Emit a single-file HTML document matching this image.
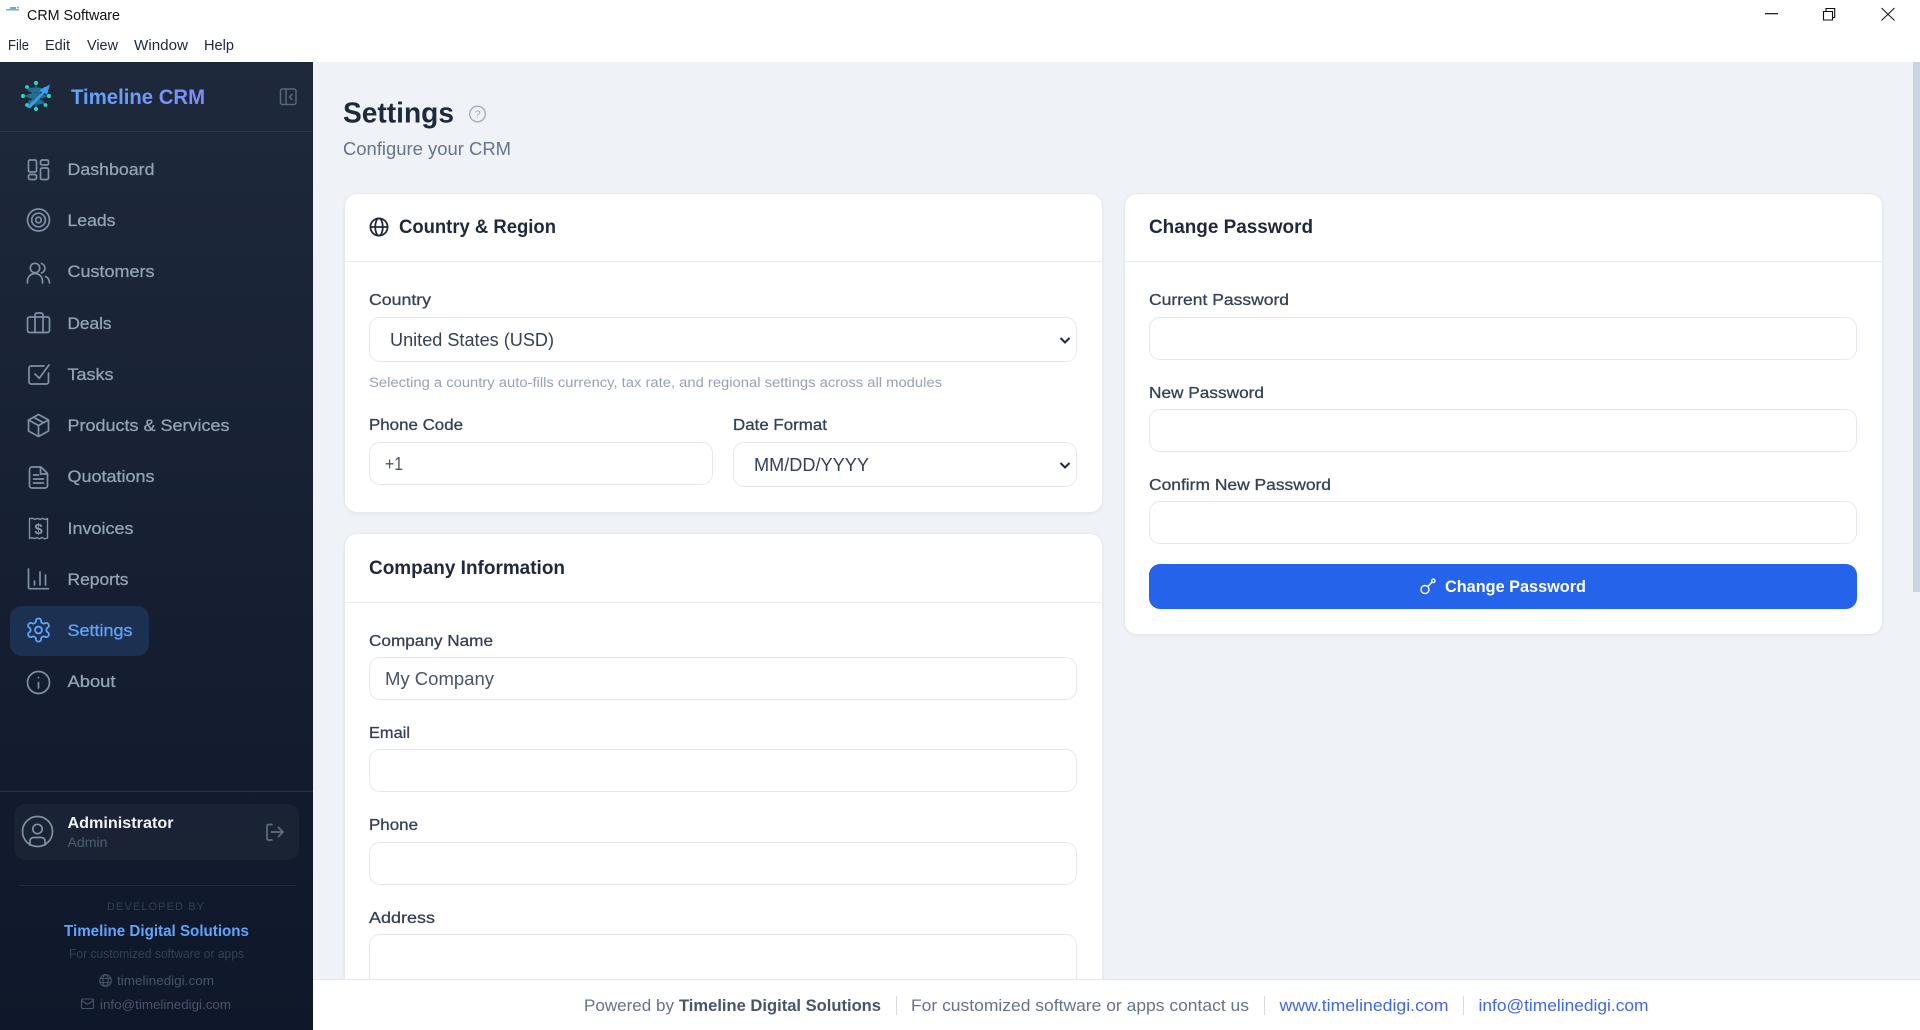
<!DOCTYPE html>
<html lang="en"><head><meta charset="utf-8"><title>CRM Software</title>
<style>
html,body{margin:0;padding:0;width:1920px;height:1030px;overflow:hidden;background:#fff}
.b{position:absolute;box-sizing:border-box}
.card{background:#fff;border:1px solid #e6eaf0;border-radius:13px;box-shadow:0 1px 3px rgba(15,23,42,.05)}
.inp{background:#fff;border:1.3px solid #e5e9ef;border-radius:11px}
svg{position:absolute;left:0;top:0}
text{font-family:"Liberation Sans",sans-serif;white-space:pre}
.m{stroke:currentColor;stroke-width:.28px}
.nav{font-size:17px;fill:#94a3b8;color:#94a3b8}
.lab{font-size:16px;fill:#334155;color:#334155}
.val{font-size:18px;fill:#334155;color:#334155}
.h{font-size:19.5px;font-weight:700;fill:#1e293b}
.ft{font-size:16.5px;fill:#64748b}
.lk{font-size:16.5px;fill:#4169e1}
.i{fill:none;stroke:#8090a6;stroke-width:1.7;stroke-linecap:round;stroke-linejoin:round}
</style></head><body>
<div class="b" style="left:0;top:62px;width:1920px;height:968px;background:#eff3f8"></div>
<div class="b" style="left:1913px;top:62px;width:7px;height:530px;background:#cbd5e1"></div>
<div class="b" style="left:0;top:62px;width:313px;height:968px;background:linear-gradient(180deg,#1e293b 0%,#0f172a 100%)"></div>
<div class="b" style="left:0;top:131px;width:313px;height:1px;background:#2b384c"></div>
<div class="b" style="left:10px;top:606px;width:139px;height:50px;background:#1c3052;border-radius:12px"></div>
<div class="b" style="left:0;top:791px;width:313px;height:1px;background:#253247"></div>
<div class="b" style="left:14px;top:804px;width:285px;height:56px;background:rgba(255,255,255,.035);border-radius:12px"></div>
<div class="b" style="left:19px;top:885px;width:277px;height:1px;background:#1f2b3f"></div>

<div class="b card" style="left:343.5px;top:192.5px;width:759px;height:320.5px"></div>
<div class="b" style="left:344px;top:260.5px;width:758px;height:1.5px;background:#e8ecf1"></div>
<div class="b inp" style="left:369px;top:317px;width:708px;height:45px"></div>
<div class="b inp" style="left:369px;top:442px;width:344px;height:43px"></div>
<div class="b inp" style="left:733px;top:442px;width:344px;height:45px"></div>

<div class="b card" style="left:343.5px;top:533px;width:759px;height:470px"></div>
<div class="b" style="left:344px;top:601.5px;width:758px;height:1.5px;background:#e8ecf1"></div>
<div class="b inp" style="left:369px;top:657px;width:708px;height:43px"></div>
<div class="b inp" style="left:369px;top:749px;width:708px;height:43px"></div>
<div class="b inp" style="left:369px;top:842px;width:708px;height:43px"></div>
<div class="b inp" style="left:369px;top:934px;width:708px;height:60px"></div>

<div class="b card" style="left:1123.5px;top:192.5px;width:759px;height:442px"></div>
<div class="b" style="left:1124px;top:260.5px;width:758px;height:1.5px;background:#e8ecf1"></div>
<div class="b inp" style="left:1149px;top:317px;width:708px;height:43px"></div>
<div class="b inp" style="left:1149px;top:409px;width:708px;height:43px"></div>
<div class="b inp" style="left:1149px;top:501px;width:708px;height:43px"></div>
<div class="b" style="left:1149px;top:564px;width:708px;height:45px;background:#2563eb;border-radius:11px"></div>

<div class="b" style="left:313px;top:979px;width:1607px;height:51px;background:#fff;border-top:1.5px solid #e2e8f0"></div>
<div class="b" style="left:896px;top:996px;width:1px;height:19px;background:#d5dbe3"></div>
<div class="b" style="left:1264px;top:996px;width:1px;height:19px;background:#d5dbe3"></div>
<div class="b" style="left:1463px;top:996px;width:1px;height:19px;background:#d5dbe3"></div>

<svg width="1920" height="1030" viewBox="0 0 1920 1030" xmlns="http://www.w3.org/2000/svg">
<defs>
<linearGradient id="tg" gradientUnits="userSpaceOnUse" x1="71" y1="0" x2="205" y2="0"><stop offset="0" stop-color="#60a5fa"/><stop offset="1" stop-color="#818cf8"/></linearGradient>
</defs>
<!-- title bar -->
<g fill="#6fb3c2"><rect x="6" y="9" width="13" height="1.5"/><rect x="10" y="7" width="6" height="3"/><circle cx="18" cy="7.5" r="1"/></g>
<text x="27" y="20" font-size="15" fill="#111" textLength="93" lengthAdjust="spacingAndGlyphs">CRM Software</text>
<g font-size="14.5" fill="#1f2937">
<text x="8" y="50" textLength="21" lengthAdjust="spacingAndGlyphs">File</text>
<text x="45" y="50" textLength="25" lengthAdjust="spacingAndGlyphs">Edit</text>
<text x="87" y="50" textLength="31" lengthAdjust="spacingAndGlyphs">View</text>
<text x="134" y="50" textLength="54" lengthAdjust="spacingAndGlyphs">Window</text>
<text x="204" y="50" textLength="30" lengthAdjust="spacingAndGlyphs">Help</text>
</g>
<path d="M1765 13.7H1778" stroke="#111" stroke-width="1.2" fill="none"/>
<path d="M1823.5 11.5h9v8.5h-9zM1826 11.5V8.5h8.7v9h-2" stroke="#111" stroke-width="1.1" fill="none"/>
<path d="M1881.5 8L1894.5 20.5M1894.5 8L1881.5 20.5" stroke="#111" stroke-width="1" fill="none"/>

<!-- logo -->
<g fill="none" stroke="#1f8f92" stroke-width="1">
<path d="M36 83V109M23 96H49M27 87L45 105M27 105L45 87"/>
</g>
<g fill="#2dd4bf"><circle cx="36" cy="83" r="2.1"/><circle cx="36" cy="109" r="2.1"/><circle cx="23" cy="96" r="2.1"/><circle cx="49" cy="96" r="2.1"/><circle cx="27" cy="87" r="1.9"/><circle cx="45.5" cy="105" r="1.9"/><circle cx="27" cy="105" r="1.9"/></g>
<g fill="#1f6f8f"><ellipse cx="36" cy="90" rx="8.5" ry="2.6"/><ellipse cx="36" cy="96" rx="9.5" ry="3"/><ellipse cx="36" cy="102" rx="8" ry="2.6"/></g>
<path d="M26.5 107L42 92.5L39.5 90L50 84.5L47 95L44.5 93L30 108.5Z" fill="#3b9cf0"/>
<text x="71" y="104" font-size="21" font-weight="700" fill="url(#tg)" textLength="134" lengthAdjust="spacingAndGlyphs">Timeline CRM</text>
<g fill="none" stroke="#58677d" stroke-width="1.5"><rect x="280.5" y="89" width="15.5" height="15.5" rx="2"/><path d="M286 89V104.5M292.5 94L289.5 97L292.5 100"/></g>

<!-- nav icons -->
<g class="i">
<rect x="28.5" y="160" width="8" height="12" rx="1.6"/><rect x="28.5" y="174.5" width="8" height="5" rx="1.6"/><rect x="40.5" y="160" width="8" height="5" rx="1.6"/><rect x="40.5" y="168" width="8" height="11.5" rx="1.6"/>
<circle cx="38.5" cy="220" r="11"/><circle cx="38.5" cy="220" r="6.8"/><circle cx="38.5" cy="220" r="2.8"/>
<circle cx="35" cy="268" r="4.7"/><path d="M27.5 283V281A7.5 7.5 0 0 1 42.5 281V283M41.5 263.5A5 5 0 0 1 41.5 273M45.5 276.5A7 7 0 0 1 49.5 283"/>
<rect x="27.5" y="317" width="22" height="15.5" rx="2"/><path d="M35 332.5V315A2 2 0 0 1 37 313H41A2 2 0 0 1 43 315V332.5"/>
<path d="M44 366H31A2 2 0 0 0 29 368V382A2 2 0 0 0 31 384H46.5A2 2 0 0 0 48.5 382V373M35 374L39.3 378.3L49 365"/>
<path d="M38.5 414.5L48.5 420V431L38.5 436.5L28.5 431V420ZM28.5 420L38.5 425.5L48.5 420M38.5 425.5V436.5M33.5 417.3L43.5 422.8"/>
<path d="M41 467H32A2.5 2.5 0 0 0 29.5 469.5V485.5A2.5 2.5 0 0 0 32 488H45A2.5 2.5 0 0 0 47.5 485.5V473.5ZM40.5 467V474H47.5M33.5 475H38.5M33.5 479H43.5M33.5 483H43.5"/>
<path d="M29.5 518.5V538.5L32 537.5L34.5 538.8L37 537.5L39.5 538.8L42 537.5L44.5 538.8L47.5 538V518.5L45 519.5L42.5 518.3L40 519.5L37.5 518.3L35 519.5L32.5 518.3Z" stroke-width="1.4"/>
<path d="M28.5 569V587.5A1.2 1.2 0 0 0 29.7 588.7H48.5M34.5 581V585M40 572V585M45.5 575V585"/>
<circle cx="38.5" cy="682.5" r="11"/><path d="M38.5 682.5V688M38.5 677.5V677.6"/>
<circle cx="37.5" cy="831.5" r="15"/><circle cx="37.5" cy="829" r="4.7"/><path d="M30 845V841A3.5 3.5 0 0 1 33.5 837.5H41.5A3.5 3.5 0 0 1 45 841V845"/>
<path d="M272 824.5H268.5A1.5 1.5 0 0 0 267 826V838.5A1.5 1.5 0 0 0 268.5 840H272M271.5 832H283M278.5 827.5L283 832L278.5 836.5" style="stroke:#5f6e84"/>
</g>
<text x="38.5" y="534" font-size="15" font-weight="700" fill="#8a99ae" text-anchor="middle">$</text>
<g transform="translate(24.7,616.2) scale(1.15)" fill="none" stroke="#60a5fa" stroke-width="1.55" stroke-linecap="round" stroke-linejoin="round"><path d="M12.22 2h-.44a2 2 0 0 0-2 2v.18a2 2 0 0 1-1 1.73l-.43.25a2 2 0 0 1-2 0l-.15-.08a2 2 0 0 0-2.73.73l-.22.38a2 2 0 0 0 .73 2.73l.15.1a2 2 0 0 1 1 1.72v.51a2 2 0 0 1-1 1.74l-.15.09a2 2 0 0 0-.73 2.73l.22.38a2 2 0 0 0 2.73.73l.15-.08a2 2 0 0 1 2 0l.43.25a2 2 0 0 1 1 1.73V20a2 2 0 0 0 2 2h.44a2 2 0 0 0 2-2v-.18a2 2 0 0 1 1-1.73l.43-.25a2 2 0 0 1 2 0l.15.08a2 2 0 0 0 2.73-.73l.22-.39a2 2 0 0 0-.73-2.73l-.15-.08a2 2 0 0 1-1-1.74v-.5a2 2 0 0 1 1-1.74l.15-.09a2 2 0 0 0 .73-2.73l-.22-.38a2 2 0 0 0-2.73-.73l-.15.08a2 2 0 0 1-2 0l-.43-.25a2 2 0 0 1-1-1.73V4a2 2 0 0 0-2-2z"/><circle cx="12" cy="12" r="3"/></g>

<!-- nav labels -->
<g class="nav">
<text class="m" x="67.5" y="175" textLength="87" lengthAdjust="spacingAndGlyphs">Dashboard</text>
<text class="m" x="67.5" y="226" textLength="48" lengthAdjust="spacingAndGlyphs">Leads</text>
<text class="m" x="67.5" y="277" textLength="87" lengthAdjust="spacingAndGlyphs">Customers</text>
<text class="m" x="67.5" y="329" textLength="44" lengthAdjust="spacingAndGlyphs">Deals</text>
<text class="m" x="67.5" y="380" textLength="46" lengthAdjust="spacingAndGlyphs">Tasks</text>
<text class="m" x="67.5" y="431" textLength="162" lengthAdjust="spacingAndGlyphs">Products &amp; Services</text>
<text class="m" x="67.5" y="482" textLength="87" lengthAdjust="spacingAndGlyphs">Quotations</text>
<text class="m" x="67.5" y="534" textLength="66" lengthAdjust="spacingAndGlyphs">Invoices</text>
<text class="m" x="67.5" y="585" textLength="61" lengthAdjust="spacingAndGlyphs">Reports</text>
<text class="m" x="67.5" y="636" textLength="65" lengthAdjust="spacingAndGlyphs" style="fill:#60a5fa;color:#60a5fa">Settings</text>
<text class="m" x="67.5" y="687" textLength="48" lengthAdjust="spacingAndGlyphs">About</text>
</g>
<text x="67.5" y="828" font-size="16" font-weight="700" fill="#f1f5f9" textLength="106" lengthAdjust="spacingAndGlyphs">Administrator</text>
<text x="67.5" y="847" font-size="13.5" fill="#4f5e74" textLength="40" lengthAdjust="spacingAndGlyphs">Admin</text>
<text x="107" y="910" font-size="11" fill="#334155" textLength="97">DEVELOPED BY</text>
<text x="64" y="936" font-size="15.5" font-weight="700" fill="#60a5fa" textLength="185" lengthAdjust="spacingAndGlyphs">Timeline Digital Solutions</text>
<text x="69" y="958" font-size="12.5" fill="#334155" textLength="175" lengthAdjust="spacingAndGlyphs">For customized software or apps</text>
<g fill="none" stroke="#475569" stroke-width="1.1"><circle cx="105.5" cy="980.5" r="5.8"/><ellipse cx="105.5" cy="980.5" rx="2.6" ry="5.8"/><path d="M100 978.5H111M100 982.5H111"/><rect x="81.5" y="999" width="12" height="9.5" rx="1.3"/><path d="M81.5 1000.5L87.5 1004.5L93.5 1000.5"/></g>
<text x="117" y="985" font-size="13" fill="#475569" textLength="97" lengthAdjust="spacingAndGlyphs">timelinedigi.com</text>
<text x="100" y="1009" font-size="13" fill="#475569" textLength="131" lengthAdjust="spacingAndGlyphs">info@timelinedigi.com</text>

<!-- page header -->
<text x="343" y="122.5" font-size="29" font-weight="700" fill="#1e293b" textLength="111" lengthAdjust="spacingAndGlyphs">Settings</text>
<circle cx="477.5" cy="114" r="7.8" fill="none" stroke="#a3aebd" stroke-width="1.4"/>
<text x="477.5" y="118" font-size="11" fill="#a3aebd" text-anchor="middle">?</text>
<text x="343" y="155" font-size="18" fill="#64748b" textLength="168" lengthAdjust="spacingAndGlyphs">Configure your CRM</text>

<!-- country card -->
<g fill="none" stroke="#1e293b" stroke-width="1.8"><circle cx="379" cy="227" r="8.6"/><ellipse cx="379" cy="227" rx="3.8" ry="8.6"/><path d="M370.4 227H387.6"/></g>
<text class="h" x="399" y="233" textLength="157" lengthAdjust="spacingAndGlyphs">Country &amp; Region</text>
<text class="lab m" x="369" y="305" textLength="62" lengthAdjust="spacingAndGlyphs">Country</text>
<text class="val" x="390" y="346" textLength="164" lengthAdjust="spacingAndGlyphs">United States (USD)</text>
<path d="M1060.5 338L1065 342.5L1069.5 338" fill="none" stroke="#1e293b" stroke-width="2"/>
<text x="369" y="387" font-size="13.5" fill="#94a3b8" textLength="573" lengthAdjust="spacingAndGlyphs">Selecting a country auto-fills currency, tax rate, and regional settings across all modules</text>
<text class="lab m" x="369" y="430" textLength="94" lengthAdjust="spacingAndGlyphs">Phone Code</text>
<text class="lab m" x="733" y="430" textLength="94" lengthAdjust="spacingAndGlyphs">Date Format</text>
<text class="val" x="385" y="470" textLength="18" lengthAdjust="spacingAndGlyphs" style="fill:#475569">+1</text>
<text class="val" x="754" y="471" textLength="115" lengthAdjust="spacingAndGlyphs">MM/DD/YYYY</text>
<path d="M1060.5 463L1065 467.5L1069.5 463" fill="none" stroke="#1e293b" stroke-width="2"/>

<!-- company card -->
<text class="h" x="369" y="574" textLength="196" lengthAdjust="spacingAndGlyphs">Company Information</text>
<text class="lab m" x="369" y="646" textLength="124" lengthAdjust="spacingAndGlyphs">Company Name</text>
<text class="val" x="385" y="685" textLength="109" lengthAdjust="spacingAndGlyphs" style="fill:#475569">My Company</text>
<text class="lab m" x="369" y="738" textLength="41" lengthAdjust="spacingAndGlyphs">Email</text>
<text class="lab m" x="369" y="830" textLength="49" lengthAdjust="spacingAndGlyphs">Phone</text>
<text class="lab m" x="369" y="923" textLength="66" lengthAdjust="spacingAndGlyphs">Address</text>

<!-- password card -->
<text class="h" x="1149" y="233" textLength="164" lengthAdjust="spacingAndGlyphs">Change Password</text>
<text class="lab m" x="1149" y="305" textLength="140" lengthAdjust="spacingAndGlyphs">Current Password</text>
<text class="lab m" x="1149" y="398" textLength="115" lengthAdjust="spacingAndGlyphs">New Password</text>
<text class="lab m" x="1149" y="490" textLength="182" lengthAdjust="spacingAndGlyphs">Confirm New Password</text>
<g fill="none" stroke="#fff" stroke-width="1.4" stroke-linecap="round"><circle cx="1425" cy="589.5" r="4"/><path d="M1428 586.5L1431.5 582.5"/><circle cx="1433.3" cy="580.8" r="1.7"/></g>
<text x="1445" y="592" font-size="17" font-weight="700" fill="#fff" textLength="141" lengthAdjust="spacingAndGlyphs">Change Password</text>

<!-- footer -->
<text class="ft" x="584" y="1011" textLength="90" lengthAdjust="spacingAndGlyphs">Powered by</text>
<text x="679" y="1011" font-size="16.5" font-weight="700" fill="#475569" textLength="202" lengthAdjust="spacingAndGlyphs">Timeline Digital Solutions</text>
<text class="ft" x="911" y="1011" textLength="338" lengthAdjust="spacingAndGlyphs">For customized software or apps contact us</text>
<text class="lk" x="1279.5" y="1011" textLength="169" lengthAdjust="spacingAndGlyphs">www.timelinedigi.com</text>
<text class="lk" x="1478.5" y="1011" textLength="170" lengthAdjust="spacingAndGlyphs">info@timelinedigi.com</text>
</svg>
</body></html>
